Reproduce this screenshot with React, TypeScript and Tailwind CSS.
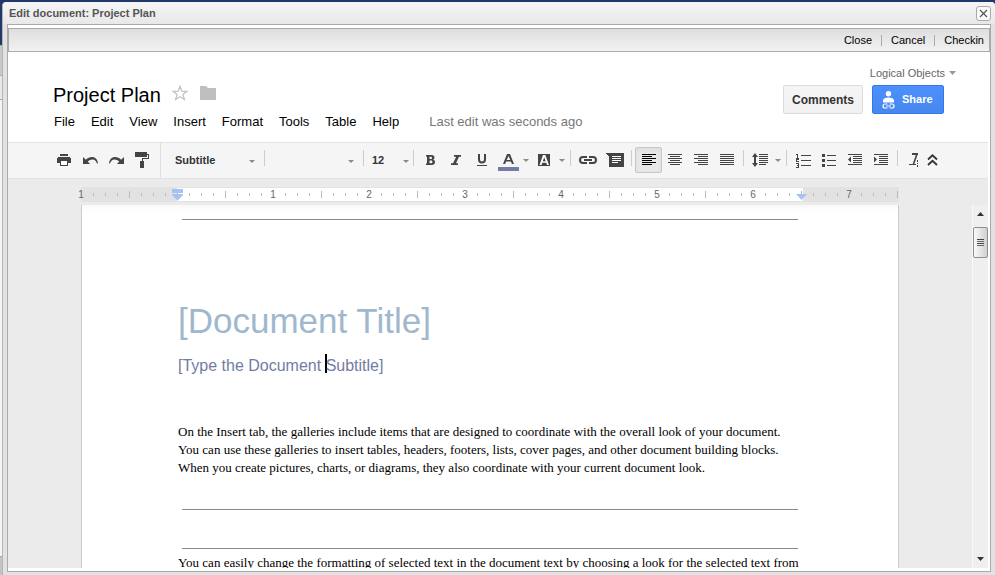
import type { ReactNode } from 'react';

const SANS = "font-['Liberation_Sans',Arial,sans-serif]";
const SERIF = "font-['Liberation_Serif','Times_New_Roman',serif]";

function Lines({ rows }: { rows: [number, number][] }) {
  return (
    <svg width="14" height="12" viewBox="0 0 14 12" shapeRendering="crispEdges" fill="currentColor">
      {rows.map(([x, w], i) => (
        <rect key={i} x={x} y={i * 2} width={w} height="1" />
      ))}
    </svg>
  );
}

const LEFT: [number, number][] = [[0, 14], [0, 10], [0, 14], [0, 10], [0, 14], [0, 10]];
const CENTER: [number, number][] = [[0, 14], [2, 10], [0, 14], [2, 10], [0, 14], [2, 10]];
const RIGHT: [number, number][] = [[0, 14], [4, 10], [0, 14], [4, 10], [0, 14], [4, 10]];
const FULL: [number, number][] = [[0, 14], [0, 14], [0, 14], [0, 14], [0, 14], [0, 14]];

function Caret({ className = '' }: { className?: string }) {
  return (
    <svg width="6" height="3" viewBox="0 0 6 3" className={className} fill="#8a8a8a">
      <path d="M0 0h6L3 3z" />
    </svg>
  );
}

function Tool({ label, size = 'w-[26px]', active = false, children }: { label: string; size?: string; active?: boolean; children: ReactNode }) {
  return (
    <button
      type="button"
      aria-label={label}
      className={`mb-px flex h-[26px] shrink-0 items-center justify-center ${size} ${
        active ? 'rounded-xs border border-[#c8c8c8] bg-[#e8e8e8] text-black shadow-inner' : 'text-[#444]'
      }`}
    >
      {children}
    </button>
  );
}

function Separator() {
  return <span className="mx-[3px] mb-[5px] h-4 w-px shrink-0 bg-[#ccc]" />;
}

function Picker({ label, value, size, pad, caret = 'right-[6px]' }: { label: string; value: string; size: string; pad: string; caret?: string }) {
  return (
    <div className={`relative shrink-0 ${size}`}>
      <select aria-label={label} className={`block h-[26px] w-full appearance-none bg-transparent text-[11px] font-bold text-[#333] ${pad}`}>
        <option>{value}</option>
      </select>
      <Caret className={`pointer-events-none absolute top-3 ${caret}`} />
    </div>
  );
}

function PrintIcon() {
  return (
    <svg width="14" height="12" viewBox="0 0 14 12" shapeRendering="crispEdges" fill="#444">
      <path d="M3 0h8v2H3zM1 3h12v1h1v5h-3V7H3v2H0V4h1z" />
      <path d="M3 7h8v5H3z" />
      <path d="M4 7h6v4H4z" fill="#fff" />
    </svg>
  );
}

function UndoIcon({ flip = false }: { flip?: boolean }) {
  return (
    <svg width="15" height="9" viewBox="0 0 15 9" className={flip ? '-scale-x-100' : ''} fill="#444">
      <path d="M0 1v7h7L4.700 5.600C6.200 4.200 8 3.400 9.600 3.500c2.200.1 3.900 1.600 4.400 4l1-.3C14.500 3.500 12.300 1 9 1 6.700 1 4.600 2 2.900 3.700z" />
    </svg>
  );
}

function PaintIcon() {
  return (
    <svg width="14" height="16" viewBox="0 0 14 16" shapeRendering="crispEdges" fill="#444">
      <path d="M0 0h12v5H0zM12 2h2v5H8v2h1v7H5V9h2V6h6V3h-1z" />
    </svg>
  );
}

function LinkIcon() {
  return (
    <svg width="18" height="8" viewBox="0 0 18 8" fill="none" stroke="#444" strokeWidth="2">
      <path d="M8 1H4a3 3 0 0 0 0 6h4M10 1h4a3 3 0 0 1 0 6h-4M5 4h8" />
    </svg>
  );
}

function CommentIcon() {
  return (
    <svg width="18" height="14" viewBox="0 0 18 14" shapeRendering="crispEdges" fill="#444">
      <path d="M0 0h18v14H3V3H2V2H1V1H0z" />
      <path d="M6 3h9v1H6zM6 5h9v1H6zM6 7h9v1H6zM6 9h6v1H6z" fill="#fff" />
    </svg>
  );
}

function SpacingIcon() {
  return (
    <svg width="16" height="14" viewBox="0 0 16 14" shapeRendering="crispEdges" fill="#444">
      <path d="M2 2h2v10H2z" />
      <path d="M0 4l3-4 3 4zM0 10l3 4 3-4z" shapeRendering="auto" />
      <path d="M7 1h9v1H7zM7 3h9v1H7zM7 5h9v1H7zM7 7h9v1H7zM7 9h9v1H7zM7 11h7v1H7z" />
    </svg>
  );
}

function NumberedIcon() {
  return (
    <svg width="15" height="15" viewBox="0 0 15 15" shapeRendering="crispEdges" fill="none" stroke="#444">
      <path d="M5 2.500h10M5 7.500h10M5 12.500h10M0 1.500h1.500v3M0 5.500h2.500v1H.5v2H3M0 10.500h2.500v4H0M1 12.500h2" />
    </svg>
  );
}

function BulletIcon() {
  return (
    <svg width="14" height="13" viewBox="0 0 14 13" shapeRendering="crispEdges" fill="#444">
      <path d="M0 0h3v3H0zM0 5h3v3H0zM0 10h3v3H0zM5 1h9v1H5zM5 6h9v1H5zM5 11h9v1H5z" />
    </svg>
  );
}

function IndentIcon({ inward = false }: { inward?: boolean }) {
  return (
    <svg width="14" height="12" viewBox="0 0 14 12" shapeRendering="crispEdges" fill="#444">
      <path d="M0 0h14v1H0zM5 2h9v1H5zM5 4h9v1H5zM5 6h9v1H5zM5 8h9v1H5zM0 10h14v1H0z" />
      <path d={inward ? 'M0 2.500v6l3-3z' : 'M3 2.500v6l-3-3z'} shapeRendering="auto" />
    </svg>
  );
}

function Toolbar() {
  return (
    <div role="toolbar" aria-label="Formatting" className="mr-[2px] flex h-[37px] shrink-0 items-center border-y border-[#e2e2e2] bg-[#f5f5f5]">
      <div className="flex h-full shrink-0 items-center border-r border-[#e0e0e0] pr-[5px] pl-[43px]">
        <Tool label="Print"><PrintIcon /></Tool>
        <Tool label="Undo"><UndoIcon /></Tool>
        <Tool label="Redo"><UndoIcon flip /></Tool>
        <Tool label="Paint format"><PaintIcon /></Tool>
      </div>
      <Picker label="Styles" value="Subtitle" size="w-[100px]" pad="pl-[14px]" />
      <Separator />
      <Picker label="Font" value="" size="w-[92px]" pad="pl-2" />
      <Separator />
      <Picker label="Font size" value="12" size="w-[43px]" pad="pl-[5px]" caret="right-px" />
      <Separator />
      <Tool label="Bold">
        <svg width="9" height="10" viewBox="0 0 9 10" fill="#444">
          <path fillRule="evenodd" d="M0 0h5.500C7.500 0 8.500 1 8.500 2.500c0 1-.5 1.800-1.300 2.200C8.400 5 9 5.900 9 7c0 1.900-1.300 3-3.300 3H0V8.500h1v-7H0zM3.500 1.700V4h1.300c.8 0 1.200-.4 1.200-1.100 0-.8-.4-1.200-1.200-1.200zm0 3.900v2.700H5c.9 0 1.400-.5 1.400-1.400 0-.8-.5-1.300-1.400-1.300z" />
        </svg>
      </Tool>
      <Tool label="Italic">
        <svg width="10" height="10" viewBox="0 0 10 10" fill="#444">
          <path d="M3 0h7v1.700H8L5 8.300h2V10H0V8.300h2L5.200 1.700H3z" />
        </svg>
      </Tool>
      <Tool label="Underline">
        <svg width="10" height="12" viewBox="0 0 10 12" fill="none" stroke="#444">
          <path d="M2 0v5.500a3 3 0 0 0 6 0V0" strokeWidth="2" />
          <path d="M0 11.500h10" />
        </svg>
      </Tool>
      <Tool label="Text color">
        <svg width="21" height="18" viewBox="0 0 21 18" className="mt-1" fill="#444">
          <path fillRule="evenodd" d="M9 1h3l4 10h-2.100l-1-2.600H8.100l-1 2.600H5zm1.500 1.900L8.700 6.900h3.600z" />
          <path d="M0 14h21v4H0z" fill="#737ca5" />
        </svg>
      </Tool>
      <Tool label="Text color menu" size="w-[10px]"><Caret /></Tool>
      <Tool label="Highlight color">
        <svg width="12" height="12" viewBox="0 0 12 12">
          <path d="M0 0h12v12H0z" fill="#444" />
          <path fillRule="evenodd" d="M5 1h2.300L11 11H9l-.8-2.300H4.300L3.500 11h-2zm1.200 2.200L4.800 7.200h2.900z" fill="#fff" />
        </svg>
      </Tool>
      <Tool label="Highlight color menu" size="w-[10px]"><Caret /></Tool>
      <Separator />
      <Tool label="Insert link" size="w-[27px]"><LinkIcon /></Tool>
      <Tool label="Insert comment" size="w-[27px]"><CommentIcon /></Tool>
      <Separator />
      <Tool label="Left align" size="w-[27px]" active><Lines rows={LEFT} /></Tool>
      <Tool label="Center align"><Lines rows={CENTER} /></Tool>
      <Tool label="Right align"><Lines rows={RIGHT} /></Tool>
      <Tool label="Justify"><Lines rows={FULL} /></Tool>
      <Separator />
      <Tool label="Line spacing"><SpacingIcon /></Tool>
      <Tool label="Line spacing menu" size="w-[10px]"><Caret /></Tool>
      <Separator />
      <Tool label="Numbered list"><NumberedIcon /></Tool>
      <Tool label="Bulleted list"><BulletIcon /></Tool>
      <Tool label="Decrease indent"><IndentIcon /></Tool>
      <Tool label="Increase indent"><IndentIcon inward /></Tool>
      <Separator />
      <Tool label="Clear formatting">
        <svg width="10" height="14" viewBox="0 0 10 14" fill="none" stroke="#444">
          <path d="M3 1h6" strokeWidth="2" />
          <path d="M8 1L4.500 11" strokeWidth="1.600" />
          <path d="M0 11.500h7M8.500 7v2M8.500 10v1M8.500 12v2" />
        </svg>
      </Tool>
      <Tool label="Hide menus" size="w-[10px]">
        <svg width="11" height="12" viewBox="0 0 11 12" className="shrink-0" fill="none" stroke="#333" strokeWidth="1.800">
          <path d="M1 5.500l4.500-4.200L10 5.500M1 11l4.500-4.200L10 11" />
        </svg>
      </Tool>
    </div>
  );
}

function Ruler() {
  const marks = Array.from({ length: 69 }, (_, i) => i);
  return (
    <div className="mr-[2px] flex h-[26px] shrink-0 items-start justify-center bg-[#ebebeb] pt-2 pr-4">
      <div className="relative flex h-[15px] w-[818px] shrink-0">
        <div className="w-24 bg-[#e2e2e2]" />
        <div className="flex-1 border-y border-[#e2e2e2] bg-white" />
        <div className="w-24 bg-[#e2e2e2]" />
        <div className="absolute inset-y-0 -left-[6px] flex items-center">
          {marks.map((i) =>
            i % 8 === 0 && i !== 8 ? (
              <span key={i} className="flex w-3 justify-center text-[10px] leading-[15px] text-[#666]">
                {i === 0 ? 1 : i / 8 - 1}
              </span>
            ) : (
              <span key={i} className="flex w-3 justify-center">
                <span className={`w-px bg-[#bbb] ${i % 4 === 0 ? 'h-[7px]' : 'h-[3px]'}`} />
              </span>
            ),
          )}
        </div>
        <svg width="11" height="12" viewBox="0 0 11 12" className="absolute top-[2px] left-[91px]" fill="#a4c2f4">
          <path d="M0 0h11v4H0zM0 5h11v1L5.500 11.500 0 6z" />
        </svg>
        <svg width="11" height="6" viewBox="0 0 11 6" className="absolute top-[7px] left-[715px]" fill="#a4c2f4">
          <path d="M0 0h11L5.500 6z" />
        </svg>
      </div>
    </div>
  );
}

function Rule({ className = '' }: { className?: string }) {
  return <hr className={`mx-1 border-t border-[#888] ${className}`} />;
}

function Scrollbar() {
  return (
    <div className="flex w-4 shrink-0 flex-col items-center border-l border-[#f8f8f8] bg-[#efefef] py-[7px]">
      <svg width="7" height="4" viewBox="0 0 7 4" fill="#333"><path d="M0 4L3.500 0 7 4z" /></svg>
      <div className="mt-[11px] flex h-[31px] w-[15px] flex-col items-center justify-center gap-px rounded-xs border border-[#8f8f8f] bg-linear-to-r from-[#fafafa] to-[#d0d0d4]">
        <span className="h-px w-[7px] bg-[#444]" />
        <span className="h-px w-[7px] bg-[#666]" />
        <span className="h-px w-[7px] bg-[#444]" />
        <span className="h-px w-[7px] bg-[#666]" />
      </div>
      <svg width="7" height="4" viewBox="0 0 7 4" className="mt-auto" fill="#333"><path d="M0 0h7L3.500 4z" /></svg>
    </div>
  );
}

function Header() {
  const menus = ['File', 'Edit', 'View', 'Insert', 'Format', 'Tools', 'Table', 'Help'];
  return (
    <header className="flex h-[90px] shrink-0 items-start justify-between pt-[13px] pr-[34px] pl-[45px]">
      <div className="mt-[18px]">
        <div className="flex items-start">
          <h1 className="text-[20px] leading-6 text-black">Project Plan</h1>
          <button type="button" aria-label="Star" className="mt-[2px] ml-[11px]">
            <svg width="16" height="16" viewBox="0 0 16 16" fill="none" stroke="#c0c0c0" strokeWidth="1.200">
              <path d="M8 1.300l1.800 4.900 5.200.1-4.100 3.200 1.500 5L8 11.600l-4.400 2.900 1.500-5L1 6.300l5.200-.1z" />
            </svg>
          </button>
          <button type="button" aria-label="Folder" className="mt-[3px] ml-3">
            <svg width="16" height="14" viewBox="0 0 16 14" fill="#bfbfbf">
              <path d="M0 0h6l2 2h8v12H0z" />
            </svg>
          </button>
        </div>
        <nav className="mt-[5px] flex gap-4 pl-px text-[13px] leading-5 text-black">
          {menus.map((m) => (
            <button key={m} type="button">{m}</button>
          ))}
          <span className="pl-[14px] text-[#777]">Last edit was seconds ago</span>
        </nav>
      </div>
      <div className="flex flex-col items-end">
        <button type="button" className="flex items-center gap-1 text-[11px] leading-4 text-[#666]">
          Logical Objects
          <svg width="7" height="4" viewBox="0 0 7 4" fill="#999"><path d="M0 0h7L3.500 4z" /></svg>
        </button>
        <div className="mt-1 mr-3 flex gap-[9px]">
          <button type="button" className="h-[29px] w-20 rounded-xs border border-[#dcdcdc] bg-linear-to-b from-[#f5f5f5] to-[#f1f1f1] text-[12px] font-bold text-[#333]">
            Comments
          </button>
          <button type="button" className="flex h-[29px] w-[72px] items-center rounded-xs border border-[#3079ed] bg-linear-to-b from-[#4d90fe] to-[#4787ed] pl-[9px] text-[11px] font-bold text-white">
            <svg width="13" height="18" viewBox="0 0 13 18" className="mr-[7px]" fill="#fff">
              <circle cx="6.500" cy="2.700" r="2.700" />
              <path d="M1 11.500V9.500C1 7.500 3.500 6.500 6.500 6.500S12 7.500 12 9.500v2z" />
              <path d="M5.500 13H3a2 2 0 0 0 0 4h2.500M7.500 13H10a2 2 0 0 1 0 4H7.500M4 15h5" fill="none" stroke="#fff" strokeWidth="1.200" />
            </svg>
            Share
          </button>
        </div>
      </div>
    </header>
  );
}

export default function App() {
  return (
    <div className={`flex h-screen overflow-hidden bg-[#22386b] ${SANS}`}>
      <div className="flex w-[2px] shrink-0 flex-col pt-[45px]">
        <div className="h-[30px] border-t border-[#aaa] bg-[#c8c8c8]" />
        <div className="h-6 border-t border-[#aaa] bg-[#e8e8e8]" />
        <div className="flex-1 border-y border-[#aaa] bg-[#f5f5f5]" />
        <div className="h-[18px] bg-[#c4c4c4]" />
      </div>
      <section className="mt-[2px] flex min-w-0 flex-1 flex-col rounded-t-[4px] border-l border-[#b5b5b5] bg-[#e2e2e2]">
        <div className="flex h-[22px] shrink-0 items-center justify-between rounded-t-[4px] bg-linear-to-b from-[#f6f6f6] to-[#e8e8e8] pr-1 pl-[6px]">
          <h2 className="text-[11px] leading-4 font-bold text-[#555]">Edit document: Project Plan</h2>
          <button type="button" aria-label="Close window" className="flex size-[15px] items-center justify-center rounded-[3px] border border-[#aaa] bg-[#fafafa]">
            <svg width="9" height="9" viewBox="0 0 9 9" stroke="#555" strokeWidth="1.200"><path d="M1 1l7 7M8 1L1 8" /></svg>
          </button>
        </div>
        <div className="mr-1 mb-[3px] ml-1 flex min-h-0 flex-1 flex-col border border-[#aaa] bg-white pt-[3px] pb-[3px]">
          <div className="flex h-6 shrink-0 items-center justify-end gap-[9px] border border-[#aaa] bg-linear-to-b from-[#dedede] to-[#f2f2f2] pr-[5px] text-[11px] leading-4 text-black">
            <button type="button">Close</button>
            <span className="h-[11px] w-px bg-[#aaa]" />
            <button type="button">Cancel</button>
            <span className="h-[11px] w-px bg-[#aaa]" />
            <button type="button">Checkin</button>
          </div>
          <Header />
          <Toolbar />
          <Ruler />
          <div className="mr-[2px] flex min-h-0 flex-1 bg-[#ebebeb]">
            <main className="flex flex-1 justify-center overflow-hidden">
              <article className="w-[818px] shrink-0 border-x border-[#ccc] bg-linear-to-b from-[#f9f9f9] to-white to-[8px] px-24 pt-[14px]">
                <Rule />
                <h3 className="mt-[81px] text-[35px] leading-10 text-[#9fb8cd]">[Document Title]</h3>
                <p className="mt-[13px] text-[16px] leading-6 text-[#727ca3]">
                  [Type the Document{' '}
                  <span className="-mx-px inline-block h-[19px] w-[2px] bg-black align-[-2px]" />
                  Subtitle]
                </p>
                <p className={`mt-[45px] text-[13px] leading-[18px] text-black ${SERIF}`}>
                  On the Insert tab, the galleries include items that are designed to coordinate with the overall look of your document. You can use these galleries to insert tables, headers, footers, lists, cover pages, and other document building blocks. When you create pictures, charts, or diagrams, they also coordinate with your current document look.
                </p>
                <Rule className="mt-8" />
                <Rule className="mt-[38px]" />
                <p className={`mt-[5px] text-[13px] leading-[18px] whitespace-nowrap text-black ${SERIF}`}>
                  You can easily change the formatting of selected text in the document text by choosing a look for the selected text from
                </p>
              </article>
            </main>
            <Scrollbar />
          </div>
        </div>
      </section>
    </div>
  );
}
